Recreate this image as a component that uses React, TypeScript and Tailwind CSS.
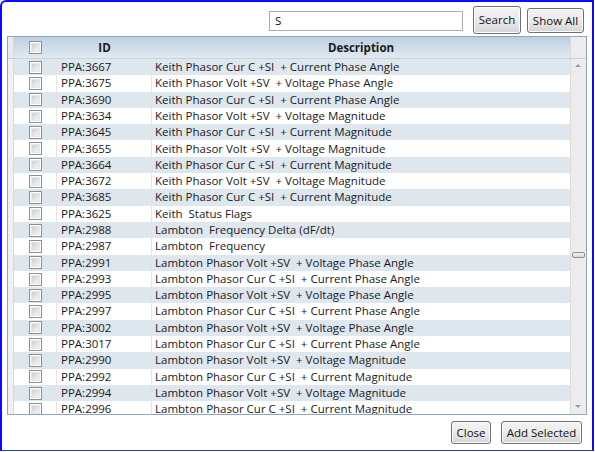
import React from "react";

const rows: [string, string][] = [
  ["PPA:3667", "Keith Phasor Cur C +SI  + Current Phase Angle"],
  ["PPA:3675", "Keith Phasor Volt +SV  + Voltage Phase Angle"],
  ["PPA:3690", "Keith Phasor Cur C +SI  + Current Phase Angle"],
  ["PPA:3634", "Keith Phasor Volt +SV  + Voltage Magnitude"],
  ["PPA:3645", "Keith Phasor Cur C +SI  + Current Magnitude"],
  ["PPA:3655", "Keith Phasor Volt +SV  + Voltage Magnitude"],
  ["PPA:3664", "Keith Phasor Cur C +SI  + Current Magnitude"],
  ["PPA:3672", "Keith Phasor Volt +SV  + Voltage Magnitude"],
  ["PPA:3685", "Keith Phasor Cur C +SI  + Current Magnitude"],
  ["PPA:3625", "Keith  Status Flags"],
  ["PPA:2988", "Lambton  Frequency Delta (dF/dt)"],
  ["PPA:2987", "Lambton  Frequency"],
  ["PPA:2991", "Lambton Phasor Volt +SV  + Voltage Phase Angle"],
  ["PPA:2993", "Lambton Phasor Cur C +SI  + Current Phase Angle"],
  ["PPA:2995", "Lambton Phasor Volt +SV  + Voltage Phase Angle"],
  ["PPA:2997", "Lambton Phasor Cur C +SI  + Current Phase Angle"],
  ["PPA:3002", "Lambton Phasor Volt +SV  + Voltage Phase Angle"],
  ["PPA:3017", "Lambton Phasor Cur C +SI  + Current Phase Angle"],
  ["PPA:2990", "Lambton Phasor Volt +SV  + Voltage Magnitude"],
  ["PPA:2992", "Lambton Phasor Cur C +SI  + Current Magnitude"],
  ["PPA:2994", "Lambton Phasor Volt +SV  + Voltage Magnitude"],
  ["PPA:2996", "Lambton Phasor Cur C +SI  + Current Magnitude"],
];

function Check() {
  return (
    <div className="w-[13px] h-[13px] border border-[#8e8f8f] bg-white p-[1px] shrink-0">
      <div className="w-full h-full bg-gradient-to-br from-[#cbcfd5] to-[#f6f6f6] border border-[#e6e6e6]" />
    </div>
  );
}

function Btn({ children, className = "" }: { children: React.ReactNode; className?: string }) {
  return (
    <div
      className={`flex items-center justify-center rounded-[3px] border border-[#707070] bg-gradient-to-b from-[#f3f3f3] via-[#ebebeb] to-[#d5d5d5] text-[11.5px] text-[#111] shadow-[inset_0_0_0_1px_#fcfcfc] ${className}`}
    >
      {children}
    </div>
  );
}

export default function App() {
  return (
    <div className="w-[595px] h-[452px] bg-white overflow-hidden" style={{ fontFamily: '"Open Sans", "Noto Sans", sans-serif' }}>
      <div className="w-[594px] h-[451px] border-l-2 border-t-2 border-r-2 border-b border-l-[#0a0aff] border-t-[#0a0aff] border-r-[#0a0aff] border-b-[#2a3fa8] rounded-tl-[6px] flex flex-col">
        {/* top bar */}
        <div className="h-[34px] flex items-start justify-end pr-[8px] pt-[4px]">
          <div className="mt-[5px] w-[194px] h-[20px] border border-[#abadb3] bg-white text-[11.5px] text-[#111] pl-[5px] leading-[18px]">
            S
          </div>
          <Btn className="ml-[10px] w-[48px] h-[28px] border-[#3c3c3c] shadow-[inset_0_0_0_1px_#ffffff]">Search</Btn>
          <Btn className="ml-[6px] mt-[2px] w-[57px] h-[25px]">Show All</Btn>
        </div>
        {/* grid */}
        <div className="ml-[5px] w-[580px] h-[379px] border border-[#8ea7bf] flex flex-col overflow-hidden text-[11.5px] text-[#1a1a1a]">
          <div className="flex h-[22px] shrink-0 bg-gradient-to-b from-[#bccfe0] to-[#e2eaf1] border-b border-[#c6d3de]">
            <div className="w-[6px] bg-[#e8ecef] border-r border-[#d5d9dc]" />
            <div className="w-[43px] flex items-center justify-center pr-[1px]">
              <Check />
            </div>
            <div className="w-[95px] flex items-center justify-center font-bold">ID</div>
            <div className="flex-1 flex items-center justify-center font-bold">Description</div>
            <div className="w-[16px] bg-[#ececec] border-l border-[#dcdcdc]" />
          </div>
          <div className="flex flex-1 overflow-hidden">
            <div className="w-[6px] bg-[#f1f1f1] border-r border-[#d9d9d9] shrink-0" />
            <div className="flex-1 overflow-hidden">
              {rows.map(([id, desc], i) => (
                <div
                  key={id}
                  className={`flex h-[16.3px] items-center ${i % 2 === 0 ? "bg-[#dee6ee]" : "bg-white"}`}
                >
                  <div className="w-[43px] h-full flex items-center justify-center border-r border-[#e4e4e4] pl-[1px]">
                    <Check />
                  </div>
                  <div className="w-[95px] h-full flex items-center pl-[4px] pb-[1px] border-r border-[#e4e4e4]">{id}</div>
                  <div className="flex-1 h-full flex items-center pl-[3px] pb-[1px] whitespace-pre">{desc}</div>
                </div>
              ))}
            </div>
            <div className="w-[16px] shrink-0 bg-[#ececec] border-l border-[#dcdcdc] relative">
              <div className="absolute left-[4px] top-[5px] w-0 h-0 border-l-[3px] border-r-[3px] border-b-[3px] border-l-transparent border-r-transparent border-b-[#9a9a9a]" />
              <div className="absolute left-[1px] top-[193px] w-[13px] h-[6px] rounded-[2px] border border-[#8f8f8f] bg-gradient-to-b from-[#f4f4f4] to-[#d8d8d8]" />
              <div className="absolute left-[4px] bottom-[6px] w-0 h-0 border-l-[3px] border-r-[3px] border-t-[3px] border-l-transparent border-r-transparent border-t-[#9a9a9a]" />
            </div>
          </div>
        </div>
        {/* bottom */}
        <div className="flex justify-end pr-[10px] pt-[6px]">
          <Btn className="w-[40px] h-[23px]">Close</Btn>
          <Btn className="ml-[10px] w-[81px] h-[23px]">Add Selected</Btn>
        </div>
      </div>
    </div>
  );
}
